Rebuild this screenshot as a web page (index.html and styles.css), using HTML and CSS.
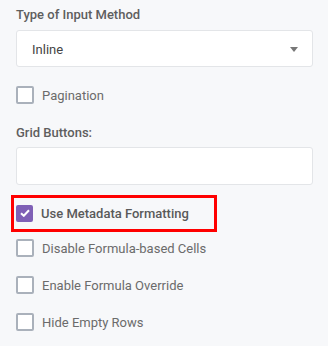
FILE: index.html
```html
<!DOCTYPE html>
<html lang="en">
<head>
    <meta charset="UTF-8">
    <meta name="viewport" content="width=device-width, initial-scale=1.0">
    <title>Grid Settings</title>
    <link rel="stylesheet" href="styles.css">
</head>
<body>
    <div class="panel">
        <div class="field">
            <div class="field-label">Type of Input Method</div>
            <div class="select">
                <span>Inline</span>
                <span class="caret"></span>
            </div>
        </div>

        <label class="check-row first">
            <span class="box"></span>
            <span class="check-text">Pagination</span>
        </label>

        <div class="field">
            <div class="field-label">Grid Buttons:</div>
            <div class="text-input"></div>
        </div>

        <!-- highlighted option -->
        <div class="highlight">
            <label class="check-row">
                <span class="box checked">
                    <svg width="10" height="8" viewBox="0 0 10 8"><path d="M1 4.2 L3.8 6.8 L9 1.3" fill="none" stroke="#fff" stroke-width="2"/></svg>
                </span>
                <span class="check-text strong">Use Metadata Formatting</span>
            </label>
        </div>

        <label class="check-row after-highlight">
            <span class="box"></span>
            <span class="check-text">Disable Formula-based Cells</span>
        </label>
        <label class="check-row">
            <span class="box"></span>
            <span class="check-text">Enable Formula Override</span>
        </label>
        <label class="check-row">
            <span class="box"></span>
            <span class="check-text">Hide Empty Rows</span>
        </label>
    </div>
</body>
</html>
```

FILE: styles.css
```css
* {
    margin: 0;
    padding: 0;
    box-sizing: border-box;
}

body {
    font-family: Roboto, "Liberation Sans", Arial, sans-serif;
    background: #f7f8fa;
    width: 328px;
    height: 346px;
    overflow: hidden;
}

.panel {
    padding: 7px 15px 0 16px;
}

.field-label {
    font-size: 13px;
    font-weight: 500;
    color: #5e5e5e;
    line-height: 16px;
}

.select {
    margin-top: 7px;
    height: 37px;
    background: white;
    border: 1px solid #e3e5e8;
    border-radius: 3px;
    display: flex;
    align-items: center;
    justify-content: space-between;
    padding: 2px 14px 0 15px;
    font-size: 13px;
    color: #444;
}

.caret {
    width: 0;
    height: 0;
    border-left: 4px solid transparent;
    border-right: 4px solid transparent;
    border-top: 5px solid #777;
}

.check-row {
    display: flex;
    align-items: center;
    gap: 8px;
    height: 18px;
    margin-top: 19px;
}

.check-row.first {
    margin-top: 19px;
    margin-bottom: 21px;
}

.check-row.after-highlight {
    margin-top: 7px;
}

.box {
    width: 18px;
    height: 18px;
    border: 2px solid #aab1bb;
    border-radius: 2px;
    background: white;
    flex-shrink: 0;
    display: flex;
    align-items: center;
    justify-content: center;
}

.box.checked {
    background: #7f60b6;
    border-color: #7f60b6;
    width: 17px;
    height: 17px;
}

.check-text {
    font-size: 13px;
    color: #6b6b6b;
}

.check-text.strong {
    font-weight: 500;
    color: #5a5a5a;
}

.text-input {
    margin-top: 6px;
    height: 38px;
    background: white;
    border: 1px solid #e3e5e8;
    border-radius: 3px;
}

.highlight {
    margin: 10px 0 0 -5px;
    width: 206px;
    height: 37px;
    border: 3px solid #ff0000;
    padding: 6px 0 0 2px;
}

.highlight .check-row {
    margin-top: 0;
}
```
